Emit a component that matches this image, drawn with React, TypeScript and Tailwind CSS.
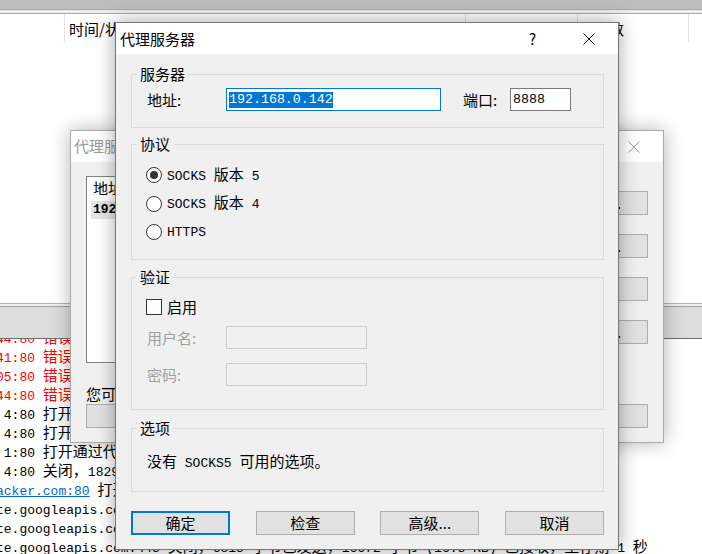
import type { ReactNode } from 'react';

const RED = 'text-[#ff0000]';
const LINK = 'text-[#0066cc] underline';

// log rows of the main window, scrolled a little to the right
const logLines: [string, string?][][] = [
    [['44:80 错误：连接被拒绝', RED]],
    [['41:80 错误：连接被拒绝', RED]],
    [['05:80 错误：连接被拒绝', RED]],
    [['44:80 错误：连接被拒绝', RED]],
    [[' 4:80 打开通过代理 192.168.0.142:8888']],
    [[' 4:80 打开通过代理 192.168.0.142:8888']],
    [[' 1:80 打开通过代理 192.168.0.142:8888']],
    [[' 4:80 关闭，1829 字节已发送，3120 字节已接收']],
    [['acker.com:80', LINK], [' 打开通过代理 192.168.0.142:8888']],
    [['te.googleapis.com:443 打开通过代理 192.168.0.142:8888']],
    [['te.googleapis.com:443 打开通过代理 192.168.0.142:8888']],
    [['te.googleapis.com:443 关闭，6815 字节已发送，16672 字节 (16.3 KB) 已接收，生存期 1 秒']],
];

// ascii in a fixed font, CJK runs in the sans CJK face
function Mixed({ text, cjk = 'text-[15px]' }: { text: string; cjk?: string }) {
    return (
        <>
            {text.split(/([\u3000-\u303f\u4e00-\u9fff\uff00-\uffef]+)/).map((part, i) =>
                i % 2 ? (
                    <span key={i} className={`font-['Noto_Sans_CJK_SC',sans-serif] ${cjk}`}>
                        {part}
                    </span>
                ) : (
                    <span key={i} className="font-['Liberation_Mono',monospace]">
                        {part}
                    </span>
                ),
            )}
        </>
    );
}

function CloseIcon({ color }: { color: string }) {
    return (
        <svg width="12" height="12" viewBox="0 0 12 12" className="block">
            <path d="M0.5 0.5L11.5 11.5M11.5 0.5L0.5 11.5" stroke={color} strokeWidth="1" />
        </svg>
    );
}

function MainWindow() {
    return (
        <div className="flex h-full flex-col">
            <div className="h-[9px] bg-[#bdbdbd]" />
            <div className="h-[1px] bg-[#a6a6a6]" />
            <div className="h-[3px] bg-[#ededed]" />
            <div className="h-[1px] bg-[#a9a9a9]" />
            <div className="flex h-[28px] text-[15px] leading-[24px]">
                <div className="w-[65px] border-r border-[#e3e3e3]" />
                <div className="w-[401px] border-r border-[#e3e3e3] pt-[3px] pl-[4px]">时间/状态</div>
                <div className="w-[112px] border-r border-[#e3e3e3] pt-[3px] pl-[24px]">会话</div>
                <div className="w-[111px] border-r border-[#e3e3e3] pt-[3px] pl-[16px]">参数</div>
                <div className="flex-1" />
            </div>
            <div className="h-[261px]" />
            <div className="flex h-[36px] flex-col border-y border-t-[#b3b3b3] border-b-[#6f6f6f]">
                <div className="h-[3px] border-b border-[#a0a0a0] bg-[#efefef]" />
                <div className="flex-1 bg-[#dcdcdc]" />
            </div>
            <div className="h-[215px] overflow-hidden">
                <div className="-mt-[12px] -ml-[4px] text-[13px]">
                    {logLines.map((line, i) => (
                        <div key={i} className="h-[19px] whitespace-pre leading-[19px]">
                            {line.map(([text, cls], j) => (
                                <span key={j} className={cls}>
                                    <Mixed text={text} />
                                </span>
                            ))}
                        </div>
                    ))}
                </div>
            </div>
        </div>
    );
}

function GrayButton({ label, className }: { label: string; className?: string }) {
    return (
        <div
            className={`flex h-[24px] items-center justify-center border border-[#adadad] bg-[#e1e1e1] text-[15px] ${className ?? ''}`}
        >
            {label}
        </div>
    );
}

// inactive dialog left behind the proxy dialog
function ListDialog() {
    return (
        <div className="absolute top-[130px] left-[70px] flex h-[313px] w-[594px] flex-col border border-[#aaaaaa] bg-[#f0f0f0] shadow-[0_0_18px_rgba(0,0,0,0.3)]">
            <div className="flex h-[31px] items-center bg-white pr-[23px] pl-[3px]">
                <span className="text-[15px] text-[#9a9a9a]">代理服务器</span>
                <span className="ml-auto">
                    <CloseIcon color="#999999" />
                </span>
            </div>
            <div className="flex flex-col pt-[14px] pl-[15px]">
                <div className="flex">
                    <div className="h-[187px] w-[462px] border border-[#828282] bg-white">
                        <div className="h-[22px] pl-[6px] text-[15px] leading-[22px]">地址</div>
                        <div className="mt-[2px] ml-[4px] h-[18px] bg-[#e5e5e5] pl-[2px] font-['Liberation_Mono',monospace] text-[13px] leading-[18px] font-bold">
                            192.168.0.142:8888
                        </div>
                    </div>
                    <div className="ml-[4px] flex w-[96px] flex-col gap-[19px] pt-[15px]">
                        <GrayButton label="添加..." />
                        <GrayButton label="编辑..." />
                        <GrayButton label="删除" />
                        <GrayButton label="导入..." />
                    </div>
                </div>
                <div className="mt-[21px] h-[19px] text-[15px] leading-[19px]">您可以添加多个代理服务器。</div>
                <div className="mt-[1px] flex">
                    <GrayButton label="" className="w-[462px]" />
                    <GrayButton label="" className="ml-[4px] w-[96px]" />
                </div>
            </div>
        </div>
    );
}

function Group({ title, className, children }: { title: string; className: string; children: ReactNode }) {
    return (
        <fieldset className={`border border-[#dcdcdc] ${className}`}>
            <legend className="ml-[5px] px-[3px] text-[15px] leading-[20px]">{title}</legend>
            {children}
        </fieldset>
    );
}

function Radio({ label, checked }: { label: string; checked?: boolean }) {
    return (
        <div className="flex h-[28.5px] items-center pl-[14px]">
            <span className="flex h-[16px] w-[16px] items-center justify-center rounded-full border border-[#333333] bg-white">
                {checked ? <span className="h-[8px] w-[8px] rounded-full bg-[#333333]" /> : null}
            </span>
            <span className="ml-[5px] text-[13px] leading-[20px] whitespace-pre">
                <Mixed text={label} />
            </span>
        </div>
    );
}

function FormRow({ label, children, className }: { label: string; children: ReactNode; className?: string }) {
    return (
        <div className={`flex h-[23px] items-center pl-[15px] ${className ?? ''}`}>
            <span className="w-[79px] text-[15px] leading-[20px] text-[#a0a0a0]">{label}</span>
            {children}
        </div>
    );
}

function ProxyDialog() {
    return (
        <div className="absolute top-[22px] left-[115px] flex h-[528px] w-[504px] flex-col border border-[#777777] bg-[#f0f0f0] shadow-[0_0_18px_rgba(0,0,0,0.35)]">
            <div className="flex h-[31px] items-center bg-white pl-[4px] pr-[23px]">
                <span className="text-[15px] leading-[20px]">代理服务器</span>
                <span className="ml-auto text-[15px] leading-[20px]">?</span>
                <span className="ml-[47px]">
                    <CloseIcon color="#000000" />
                </span>
            </div>
            <div className="flex flex-col pt-[10px] pr-[14px] pl-[15px]">
                <Group title="服务器" className="h-[64px]">
                    <div className="mt-[4px] flex h-[23px] items-center pl-[15px]">
                        <span className="w-[79px] text-[15px] leading-[20px]">地址:</span>
                        <div className="flex h-[23px] w-[215px] items-center border border-[#0078d7] bg-white pl-[2px]">
                            <span className="bg-[#0078d7] font-['Liberation_Mono',monospace] text-[13.3px] leading-[16px] text-white">
                                192.168.0.142
                            </span>
                        </div>
                        <span className="ml-[22px] w-[47px] text-[15px] leading-[20px]">端口:</span>
                        <div className="flex h-[23px] w-[61px] items-center border border-[#7a7a7a] bg-white pl-[2px] font-['Liberation_Mono',monospace] text-[13.3px]">
                            8888
                        </div>
                    </div>
                </Group>
                <Group title="协议" className="mt-[6px] h-[126px]">
                    <div className="flex flex-col pt-[7px]">
                        <Radio label="SOCKS 版本 5" checked />
                        <Radio label="SOCKS 版本 4" />
                        <Radio label="HTTPS" />
                    </div>
                </Group>
                <Group title="验证" className="mt-[7px] h-[143px]">
                    <div className="flex flex-col pt-[8px]">
                        <div className="flex h-[24px] items-center pl-[14px]">
                            <span className="h-[16px] w-[16px] border border-[#333333] bg-white" />
                            <span className="ml-[5px] text-[15px] leading-[20px]">启用</span>
                        </div>
                        <FormRow label="用户名:" className="mt-[7px]">
                            <div className="h-[23px] w-[141px] border border-[#cccccc] bg-[#f0f0f0]" />
                        </FormRow>
                        <FormRow label="密码:" className="mt-[14px]">
                            <div className="h-[23px] w-[141px] border border-[#cccccc] bg-[#f0f0f0]" />
                        </FormRow>
                    </div>
                </Group>
                <Group title="选项" className="mt-[8px] h-[74px]">
                    <div className="mt-[13px] h-[20px] pl-[15px] text-[13px] leading-[20px] whitespace-pre">
                        <Mixed text="没有 SOCKS5 可用的选项。" />
                    </div>
                </Group>
                <div className="mt-[19px] flex justify-between">
                    <div className="flex h-[24px] w-[99px] items-center justify-center border-2 border-[#0078d7] bg-[#e1e1e1] text-[15px]">
                        确定
                    </div>
                    <GrayButton label="检查" className="w-[99px]" />
                    <GrayButton label="高级..." className="w-[99px]" />
                    <GrayButton label="取消" className="w-[99px]" />
                </div>
            </div>
        </div>
    );
}

export default function App() {
    return (
        <div className="relative h-[554px] w-[702px] overflow-hidden bg-white font-['Noto_Sans_CJK_SC',sans-serif] text-black">
            <MainWindow />
            <ListDialog />
            <ProxyDialog />
        </div>
    );
}
